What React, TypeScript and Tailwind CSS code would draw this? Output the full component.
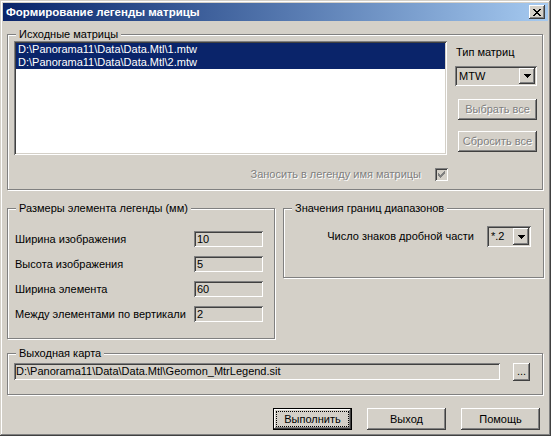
import type { ReactNode } from 'react';

const RAISED = 'shadow-[inset_-1px_-1px_#404040,inset_1px_1px_#fff,inset_-2px_-2px_#808080,inset_2px_2px_#d4d0c8]';
const SUNKEN = 'shadow-[inset_1px_1px_#808080,inset_-1px_-1px_#fff,inset_2px_2px_#404040,inset_-2px_-2px_#d4d0c8]';
const DISABLED_TEXT = 'text-[#808080] [text-shadow:1px_1px_0_#fff]';

const SOURCES = ['D:\\Panorama11\\Data\\Data.Mtl\\1.mtw', 'D:\\Panorama11\\Data\\Data.Mtl\\2.mtw'];

const SIZES = [
  { label: 'Ширина изображения', value: '10' },
  { label: 'Высота изображения', value: '5' },
  { label: 'Ширина элемента', value: '60' },
  { label: 'Между элементами по вертикали', value: '2' },
];

function Group({ title, className, children }: { title: string; className: string; children: ReactNode }) {
  return (
    <fieldset className={`border border-[#808080] shadow-[1px_1px_0_#fff,inset_1px_1px_0_#fff] ${className}`}>
      <legend className="ml-[8px] px-[3px] leading-[13px] bg-[#d4d0c8]">{title}</legend>
      {children}
    </fieldset>
  );
}

function Arrow() {
  return (
    <svg width="7" height="4" viewBox="0 0 7 4" shapeRendering="crispEdges">
      <rect x="0" y="0" width="7" height="1" fill="#000" />
      <rect x="1" y="1" width="5" height="1" fill="#000" />
      <rect x="2" y="2" width="3" height="1" fill="#000" />
      <rect x="3" y="3" width="1" height="1" fill="#000" />
    </svg>
  );
}

function Combo({ value, className }: { value: string; className: string }) {
  return (
    <div className={`flex items-stretch p-[2px] bg-[#d4d0c8] ${SUNKEN} ${className}`}>
      <span className="flex-1 flex items-center pl-[2px]">{value}</span>
      <span className={`w-[16px] flex items-center justify-center bg-[#d4d0c8] ${RAISED}`}>
        <Arrow />
      </span>
    </div>
  );
}

function Btn({ children, disabled, className }: { children: ReactNode; disabled?: boolean; className: string }) {
  return (
    <button className={`flex items-center justify-center bg-[#d4d0c8] ${RAISED} ${disabled ? DISABLED_TEXT : 'text-black'} ${className}`}>
      {children}
    </button>
  );
}

export default function App() {
  return (
    <div className="w-[551px] h-[436px] p-[3px] flex flex-col bg-[#d4d0c8] text-black text-[11px] leading-[13px] font-['Liberation_Sans',Arial,sans-serif] shadow-[inset_-1px_-1px_#404040,inset_1px_1px_#d4d0c8,inset_-2px_-2px_#808080,inset_2px_2px_#fff]">
      {/* Title bar */}
      <div className="h-[18px] shrink-0 flex items-center justify-between pl-[3px] pr-[3px] bg-gradient-to-r from-[#0a246a] to-[#a6caf0]">
        <span className="text-white font-bold text-[11.5px] leading-[14px]">Формирование легенды матрицы</span>
        <button className={`w-[16px] h-[14px] flex items-center justify-center bg-[#d4d0c8] ${RAISED}`}>
          <svg width="8" height="7" viewBox="0 0 8 7" shapeRendering="crispEdges">
            <path d="M0 0h2v1h-2zM6 0h2v1h-2zM1 1h2v1h-2zM5 1h2v1h-2zM2 2h4v1h-4zM3 3h2v1h-2zM2 4h4v1h-4zM1 5h2v1h-2zM5 5h2v1h-2zM0 6h2v1h-2zM6 6h2v1h-2z" fill="#000" />
          </svg>
        </button>
      </div>

      <div className="flex-1 flex flex-col px-[4px]">
        {/* Source matrices */}
        <Group title="Исходные матрицы" className="mt-[7px] w-[536px] h-[162px]">
          <div className="flex pl-[6px]">
            <div className="w-[433px] flex flex-col">
              <div className={`h-[114px] p-[2px] bg-white ${SUNKEN}`}>
                {SOURCES.map(s => (
                  <div key={s} className="h-[13px] pl-[2px] bg-[#0a246a] text-white whitespace-nowrap">{s}</div>
                ))}
              </div>
              <div className="mt-[13px] flex items-center justify-end gap-[14px]">
                <span className={DISABLED_TEXT}>Заносить в легенду имя матрицы</span>
                <span className={`w-[13px] h-[13px] -mr-[1px] flex items-center justify-center bg-[#d4d0c8] ${SUNKEN}`}>
                  <svg width="7" height="7" viewBox="0 0 7 7" shapeRendering="crispEdges">
                    <path d="M6 0h1v1h-1zM5 1h2v1h-2zM0 2h1v1h-1zM4 2h3v1h-3zM0 3h2v1h-2zM3 3h3v1h-3zM0 4h5v1h-5zM1 5h3v1h-3zM2 6h1v1h-1z" fill="#808080" />
                  </svg>
                </span>
              </div>
            </div>
            <div className="ml-[8px] w-[82px] flex flex-col">
              <span className="mt-[5px] pl-[1px]">Тип матриц</span>
              <Combo value="MTW" className="mt-[7px] w-[82px] h-[20px]" />
              <Btn disabled className="mt-[13px] ml-[3px] w-[79px] h-[21px]">Выбрать все</Btn>
              <Btn disabled className="mt-[11px] ml-[3px] w-[79px] h-[21px]">Сбросить все</Btn>
            </div>
          </div>
        </Group>

        <div className="mt-[12px] flex items-start gap-[8px]">
          {/* Element sizes */}
          <Group title="Размеры элемента легенды (мм)" className="w-[268px] h-[137px]">
            <div className="pt-[16px] pl-[7px] flex flex-col gap-[9px]">
              {SIZES.map(r => (
                <div key={r.label} className="h-[16px] flex items-center">
                  <span className="w-[179px] whitespace-nowrap">{r.label}</span>
                  <span className={`w-[69px] h-[16px] pl-[3px] flex items-center bg-[#d4d0c8] ${SUNKEN}`}>{r.value}</span>
                </div>
              ))}
            </div>
          </Group>

          {/* Range boundaries */}
          <Group title="Значения границ диапазонов" className="w-[261px] h-[76px]">
            <div className="pt-[11px] pr-[12px] flex items-center justify-end gap-[13px]">
              <span>Число знаков дробной части</span>
              <Combo value="*.2" className="w-[44px] h-[21px]" />
            </div>
          </Group>
        </div>

        {/* Output map */}
        <Group title="Выходная карта" className="mt-[8px] w-[536px] h-[48px]">
          <div className="pt-[3px] pl-[6px] flex items-start">
            <span className={`w-[486px] h-[17px] pl-[2px] flex items-center bg-[#d4d0c8] whitespace-nowrap ${SUNKEN}`}>
              D:\Panorama11\Data\Data.Mtl\Geomon_MtrLegend.sit
            </span>
            <Btn className="ml-[13px] w-[17px] h-[18px] items-end pb-[3px]">...</Btn>
          </div>
        </Group>

        {/* Dialog buttons */}
        <div className="mt-[13px] pr-[4px] flex justify-end gap-[15px]">
          <button className="w-[79px] h-[22px] border border-black bg-[#d4d0c8]">
            <span className={`w-full h-full p-[3px] flex ${RAISED}`}>
              <span className="flex-1 flex items-center justify-center outline outline-1 outline-dotted outline-black">Выполнить</span>
            </span>
          </button>
          <Btn className="w-[79px] h-[22px]">Выход</Btn>
          <Btn className="w-[79px] h-[22px]">Помощь</Btn>
        </div>
      </div>
    </div>
  );
}
